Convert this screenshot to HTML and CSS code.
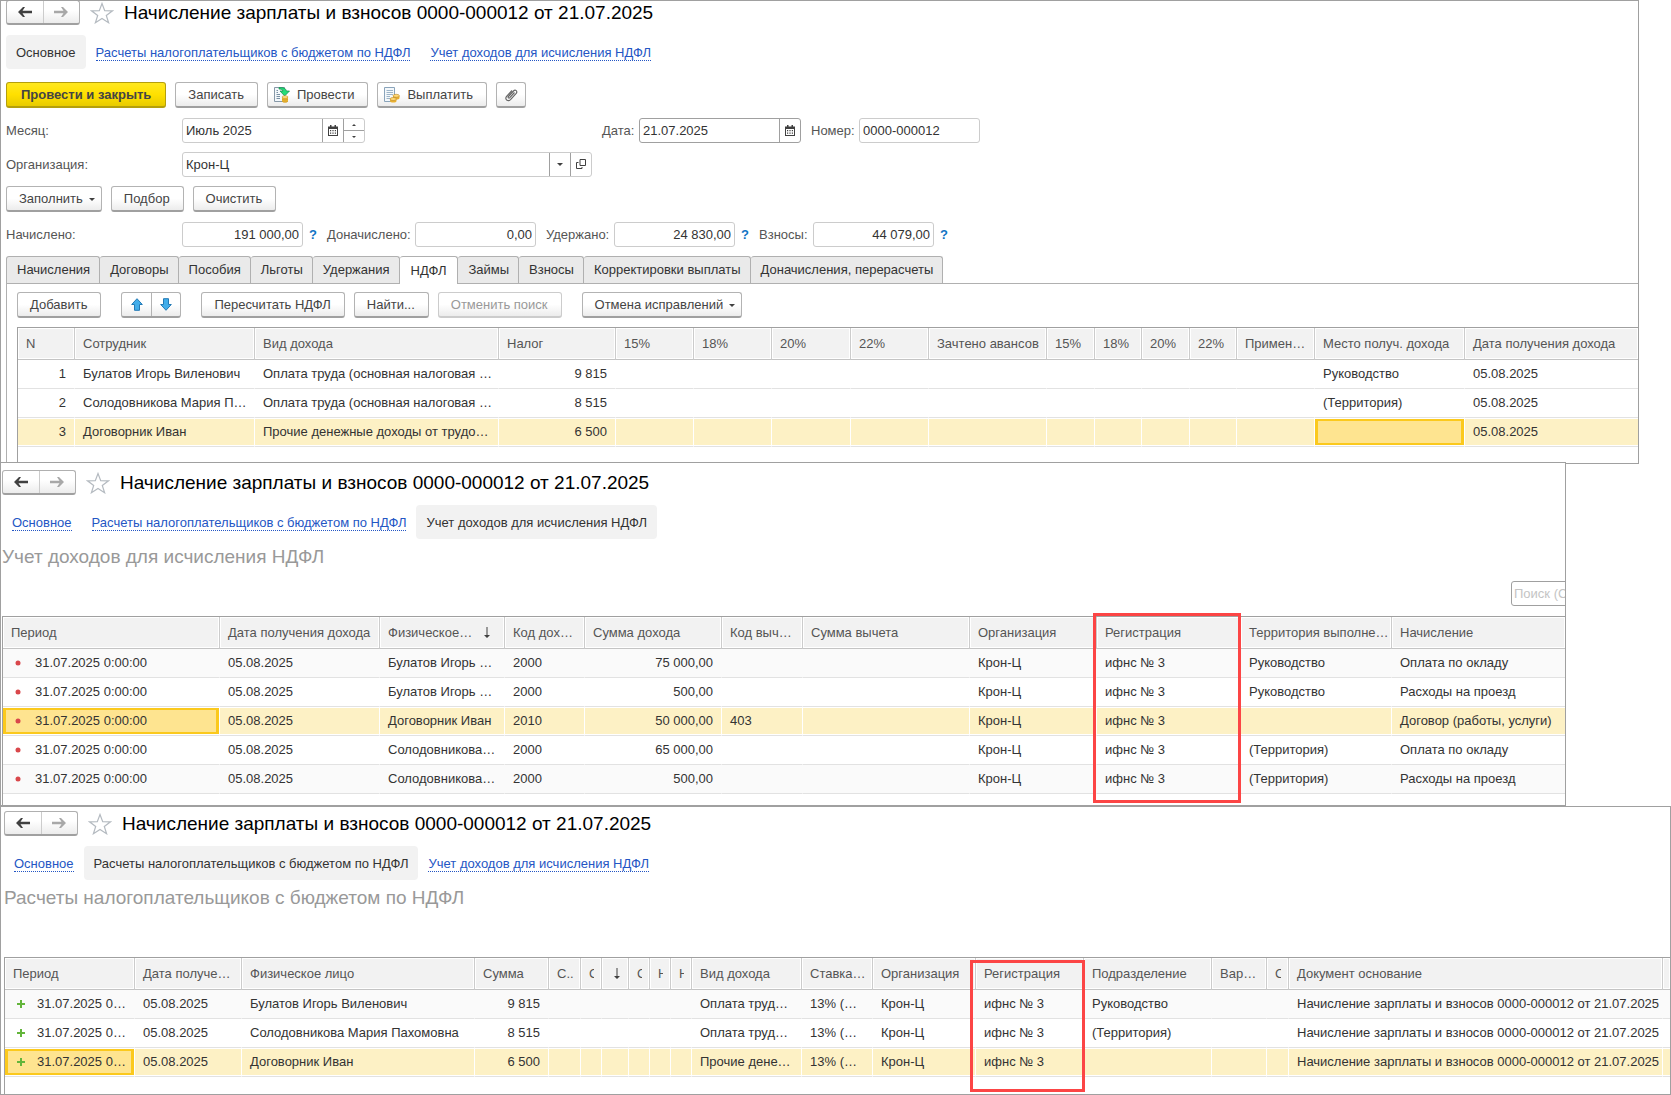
FILE: index.html
```html
<!DOCTYPE html>
<html lang="ru">
<head>
  <meta charset="UTF-8" />
  <meta name="viewport" content="width=device-width, initial-scale=1" />
  <title>Начисление зарплаты и взносов</title>
  <link rel="stylesheet" href="styles.css">
</head>
<body>
  <!-- Общие значки -->
  <svg class="sprite" aria-hidden="true">
    <symbol id="i-back" viewBox="0 0 14 10"><path d="M0 5L5 0H7L4.500 3.800H14V6.200H4.500L7 10H5Z" fill="currentColor"/></symbol>
    <symbol id="i-forward" viewBox="0 0 14 10"><path d="M14 5L9 0H7L9.500 3.800H0V6.200H9.500L7 10H9Z" fill="currentColor"/></symbol>
    <symbol id="i-star" viewBox="0 0 24 22"><path d="M12 1.500L14.700 8.600L22.500 8.800L16.300 13.400L18.600 20.700L12 16.400L5.400 20.700L7.700 13.400L1.500 8.800L9.300 8.600Z" fill="#fff" stroke="#b4bac0" stroke-width="1.200"/></symbol>
    <symbol id="i-calendar" viewBox="0 0 10 11"><path d="M0 1.500H10V11H0Z M2 0H3.500V2H2Z M6.500 0H8V2H6.500Z" fill="#404040"/><path d="M1 4H9V10H1Z" fill="#fff"/><path d="M2 5H3.200V6.200H2Z M4.400 5H5.600V6.200H4.400Z M6.800 5H8V6.200H6.800Z M2 7.500H3.200V8.700H2Z M4.400 7.500H5.600V8.700H4.400Z M6.800 7.500H8V8.700H6.800Z" fill="#404040"/></symbol>
    <symbol id="i-down" viewBox="0 0 6 3"><path d="M0 0H6L3 3Z" fill="#404040"/></symbol>
    <symbol id="i-open" viewBox="0 0 10 10"><path d="M4 0.500H9.500V6.500H4Z M2.500 3.500H0.500V9.500H6V8" fill="none" stroke="#404040"/></symbol>
    <symbol id="i-sort" viewBox="0 0 6 11"><path d="M2.500 0H3.500V8H6L3 11L0 8H2.500Z" fill="#404040"/></symbol>
    <symbol id="i-plus" viewBox="0 0 8 8"><path d="M3 0H5V3H8V5H5V8H3V5H0V3H3Z" fill="#63b53b"/></symbol>
    <symbol id="i-dot" viewBox="0 0 6 6"><circle cx="3" cy="3" r="2.500" fill="#d9474b"/></symbol>
    <symbol id="i-up-blue" viewBox="0 0 12 13"><path d="M6 0.700L11.300 6.500H8.500V12.300H3.500V6.500H0.700Z" fill="#41adea" stroke="#2279b5"/></symbol>
    <symbol id="i-down-blue" viewBox="0 0 12 13"><path d="M6 12.300L0.700 6.500H3.500V0.700H8.500V6.500H11.300Z" fill="#41adea" stroke="#2279b5"/></symbol>
    <symbol id="i-post" viewBox="0 0 16 16"><path d="M0.500 0.500H10.500V14.500H0.500Z" fill="#f4f8fb" stroke="#8799a8"/><path d="M2.500 3.500H4M2.500 5.500H4M2.500 7.500H6M2.500 9.500H6M2.500 11.500H6" stroke="#7890a3"/><path d="M5 0.600C9 0.300 12 1.200 12.400 4H15.500L10.700 9L6 4H9C8.500 2.700 7.500 2 5 2Z" fill="#25dc77" stroke="#16884b" stroke-width=".7"/><path d="M8 10V14C8 16 14 16 14 14V10Z" fill="#edb832"/><ellipse cx="11" cy="10" rx="3" ry="1.300" fill="#ffe28a" stroke="#bf8b20" stroke-width=".5"/><path d="M8 12C9 13.300 13 13.300 14 12M8 14C9 15.500 13 15.500 14 14" fill="none" stroke="#bf8b20" stroke-width=".6"/></symbol>
    <symbol id="i-pay" viewBox="0 0 16 16"><path d="M0.500 0.500H10.500V14.500H0.500Z" fill="#f4f8fb" stroke="#8aa4bb"/><path d="M2.500 3.500H9M2.500 5.500H9M2.500 7.500H9M2.500 9.500H6M2.500 11.500H6" stroke="#9cb4c8"/><path d="M9 9V11C9 13 15.500 13 15.500 11V9Z" fill="#e9b030"/><ellipse cx="12.200" cy="8.800" rx="3.200" ry="1.500" fill="#ffd977" stroke="#b98322" stroke-width=".6"/><path d="M6 12V14C6 16 12.500 16 12.500 14V12Z" fill="#e9b030"/><ellipse cx="9.200" cy="12" rx="3.200" ry="1.500" fill="#ffd977" stroke="#b98322" stroke-width=".6"/></symbol>
    <symbol id="i-clip" viewBox="0 0 14 14"><path d="M10.500 4.500L5.800 9.700C4.800 10.700 3.500 9.500 4.400 8.500L9.500 3C11.300 1 14 3.200 12.200 5.300L6.500 11.600C4 14.200 0.200 11.200 2.600 8.400L8 2.500" fill="none" stroke="#666" stroke-width="1.200"/></symbol>
  </svg>

  <!-- Документ -->
  <section class="window window-doc">
    <header class="title-bar">
      <div class="history">
        <button type="button" aria-label="Назад"><svg><use href="#i-back"/></svg></button>
        <button type="button" aria-label="Вперед" disabled><svg><use href="#i-forward"/></svg></button>
      </div>
      <svg class="star"><use href="#i-star"/></svg>
      <h1>Начисление зарплаты и взносов 0000-000012 от 21.07.2025</h1>
    </header>
    <nav class="links">
      <span class="current">Основное</span>
      <a href="#"><span>Расчеты налогоплательщиков с бюджетом по НДФЛ</span></a>
      <a href="#"><span>Учет доходов для исчисления НДФЛ</span></a>
    </nav>

    <div class="toolbar toolbar-main">
      <button type="button" class="btn primary">Провести и закрыть</button>
      <button type="button" class="btn">Записать</button>
      <button type="button" class="btn with-icon"><svg class="icon16"><use href="#i-post"/></svg>Провести</button>
      <button type="button" class="btn with-icon"><svg class="icon16"><use href="#i-pay"/></svg>Выплатить</button>
      <button type="button" class="btn square" aria-label="Присоединенные файлы"><svg class="icon14"><use href="#i-clip"/></svg></button>
    </div>

    <div class="form-row">
      <div class="form-left">
        <label class="form-label" for="month">Месяц:</label>
        <div class="field field-month">
          <input id="month" type="text" value="Июль 2025">
          <button type="button" aria-label="Выбрать месяц"><svg class="calendar"><use href="#i-calendar"/></svg></button>
          <div class="spinner">
            <button type="button" aria-label="Больше"><svg class="up"><use href="#i-down"/></svg></button>
            <button type="button" aria-label="Меньше"><svg><use href="#i-down"/></svg></button>
          </div>
        </div>
      </div>
      <label class="label-date" for="date">Дата:</label>
      <div class="field field-date">
        <input id="date" type="text" value="21.07.2025">
        <button type="button" aria-label="Выбрать дату"><svg class="calendar"><use href="#i-calendar"/></svg></button>
      </div>
      <label class="label-number" for="number">Номер:</label>
      <div class="field field-short"><input id="number" type="text" value="0000-000012"></div>
    </div>

    <div class="form-row">
      <label class="form-label" for="org">Организация:</label>
      <div class="field field-org">
        <select id="org"><option>Крон-Ц</option></select>
        <span class="drop"><svg class="caret"><use href="#i-down"/></svg></span>
        <button type="button" aria-label="Открыть"><svg class="icon10"><use href="#i-open"/></svg></button>
      </div>
    </div>

    <div class="toolbar">
      <button type="button" class="btn menu">Заполнить<svg class="caret"><use href="#i-down"/></svg></button>
      <button type="button" class="btn">Подбор</button>
      <button type="button" class="btn">Очистить</button>
    </div>

    <div class="form-row totals">
      <label class="form-label" for="accrued">Начислено:</label>
      <div class="field field-short"><input id="accrued" class="num" type="text" value="191 000,00"></div>
      <a class="help" href="#">?</a>
      <label class="label-extra" for="extra">Доначислено:</label>
      <div class="field field-short"><input id="extra" class="num" type="text" value="0,00"></div>
      <label class="label-held" for="held">Удержано:</label>
      <div class="field field-short"><input id="held" class="num" type="text" value="24 830,00"></div>
      <a class="help" href="#">?</a>
      <label class="label-fees" for="fees">Взносы:</label>
      <div class="field field-short"><input id="fees" class="num" type="text" value="44 079,00"></div>
      <a class="help" href="#">?</a>
    </div>

    <div class="tabs" role="tablist">
      <button type="button" role="tab">Начисления</button>
      <button type="button" role="tab">Договоры</button>
      <button type="button" role="tab">Пособия</button>
      <button type="button" role="tab">Льготы</button>
      <button type="button" role="tab">Удержания</button>
      <button type="button" role="tab" class="active" aria-selected="true">НДФЛ</button>
      <button type="button" role="tab">Займы</button>
      <button type="button" role="tab">Взносы</button>
      <button type="button" role="tab">Корректировки выплаты</button>
      <button type="button" role="tab">Доначисления, перерасчеты</button>
    </div>

    <div class="tab-panel">
      <div class="toolbar">
        <button type="button" class="btn">Добавить</button>
        <div class="move">
          <button type="button" aria-label="Вверх"><svg><use href="#i-up-blue"/></svg></button>
          <button type="button" aria-label="Вниз"><svg><use href="#i-down-blue"/></svg></button>
        </div>
        <button type="button" class="btn">Пересчитать НДФЛ</button>
        <button type="button" class="btn">Найти...</button>
        <button type="button" class="btn" disabled>Отменить поиск</button>
        <button type="button" class="btn menu spaced">Отмена исправлений<svg class="caret"><use href="#i-down"/></svg></button>
      </div>
      <div class="grid">
        <table>
          <colgroup>
            <col class="w57"><col class="w180"><col class="w244"><col class="w117"><col class="w78"><col class="w78"><col class="w79"><col class="w78"><col class="w118"><col class="w48"><col class="w47"><col class="w48"><col class="w47"><col class="w78"><col class="w150"><col>
          </colgroup>
          <thead>
            <tr><th>N</th><th>Сотрудник</th><th>Вид дохода</th><th>Налог</th><th>15%</th><th>18%</th><th>20%</th><th>22%</th><th>Зачтено авансов</th><th>15%</th><th>18%</th><th>20%</th><th>22%</th><th>Примен…</th><th>Место получ. дохода</th><th>Дата получения дохода</th></tr>
          </thead>
          <tbody>
            <tr><td class="num">1</td><td>Булатов Игорь Виленович</td><td>Оплата труда (основная налоговая …</td><td class="num">9 815</td><td></td><td></td><td></td><td></td><td></td><td></td><td></td><td></td><td></td><td></td><td>Руководство</td><td>05.08.2025</td></tr>
            <tr><td class="num">2</td><td>Солодовникова Мария П…</td><td>Оплата труда (основная налоговая …</td><td class="num">8 515</td><td></td><td></td><td></td><td></td><td></td><td></td><td></td><td></td><td></td><td></td><td>(Территория)</td><td>05.08.2025</td></tr>
            <tr class="selected"><td class="num">3</td><td>Договорник Иван</td><td>Прочие денежные доходы от трудо…</td><td class="num">6 500</td><td></td><td></td><td></td><td></td><td></td><td></td><td></td><td></td><td></td><td></td><td class="focus"></td><td>05.08.2025</td></tr>
          </tbody>
        </table>
      </div>
    </div>
  </section>

  <!-- Учет доходов -->
  <section class="window window-income">
    <header class="title-bar">
      <div class="history">
        <button type="button" aria-label="Назад"><svg><use href="#i-back"/></svg></button>
        <button type="button" aria-label="Вперед" disabled><svg><use href="#i-forward"/></svg></button>
      </div>
      <svg class="star"><use href="#i-star"/></svg>
      <h1>Начисление зарплаты и взносов 0000-000012 от 21.07.2025</h1>
    </header>
    <nav class="links">
      <a href="#"><span>Основное</span></a>
      <a href="#"><span>Расчеты налогоплательщиков с бюджетом по НДФЛ</span></a>
      <span class="current">Учет доходов для исчисления НДФЛ</span>
    </nav>
    <h2>Учет доходов для исчисления НДФЛ</h2>
    <div class="search-row">
      <input class="search" type="text" aria-label="Поиск" placeholder="Поиск (Ctrl+F)">
    </div>
    <div class="grid striped">
      <table>
        <colgroup>
          <col class="w217"><col class="w160"><col class="w125"><col class="w80"><col class="w137"><col class="w81"><col class="w167"><col class="w127"><col class="w144"><col class="w151"><col>
        </colgroup>
        <thead>
          <tr><th>Период</th><th>Дата получения дохода</th><th><span class="sorted">Физическое…<svg class="sort"><use href="#i-sort"/></svg></span></th><th>Код дох…</th><th>Сумма дохода</th><th>Код выч…</th><th>Сумма вычета</th><th>Организация</th><th>Регистрация</th><th>Территория выполне…</th><th>Начисление</th></tr>
        </thead>
        <tbody>
          <tr><td><svg class="mark dot"><use href="#i-dot"/></svg>31.07.2025 0:00:00</td><td>05.08.2025</td><td>Булатов Игорь …</td><td>2000</td><td class="num">75 000,00</td><td></td><td></td><td>Крон-Ц</td><td>ифнс № 3</td><td>Руководство</td><td>Оплата по окладу</td></tr>
          <tr><td><svg class="mark dot"><use href="#i-dot"/></svg>31.07.2025 0:00:00</td><td>05.08.2025</td><td>Булатов Игорь …</td><td>2000</td><td class="num">500,00</td><td></td><td></td><td>Крон-Ц</td><td>ифнс № 3</td><td>Руководство</td><td>Расходы на проезд</td></tr>
          <tr class="selected"><td class="focus"><svg class="mark dot"><use href="#i-dot"/></svg>31.07.2025 0:00:00</td><td>05.08.2025</td><td>Договорник Иван</td><td>2010</td><td class="num">50 000,00</td><td>403</td><td></td><td>Крон-Ц</td><td>ифнс № 3</td><td></td><td>Договор (работы, услуги)</td></tr>
          <tr><td><svg class="mark dot"><use href="#i-dot"/></svg>31.07.2025 0:00:00</td><td>05.08.2025</td><td>Солодовникова…</td><td>2000</td><td class="num">65 000,00</td><td></td><td></td><td>Крон-Ц</td><td>ифнс № 3</td><td>(Территория)</td><td>Оплата по окладу</td></tr>
          <tr><td><svg class="mark dot"><use href="#i-dot"/></svg>31.07.2025 0:00:00</td><td>05.08.2025</td><td>Солодовникова…</td><td>2000</td><td class="num">500,00</td><td></td><td></td><td>Крон-Ц</td><td>ифнс № 3</td><td>(Территория)</td><td>Расходы на проезд</td></tr>
        </tbody>
      </table>
      <div class="highlight highlight-income"></div>
    </div>
  </section>

  <!-- Расчеты с бюджетом -->
  <section class="window window-budget">
    <header class="title-bar">
      <div class="history">
        <button type="button" aria-label="Назад"><svg><use href="#i-back"/></svg></button>
        <button type="button" aria-label="Вперед" disabled><svg><use href="#i-forward"/></svg></button>
      </div>
      <svg class="star"><use href="#i-star"/></svg>
      <h1>Начисление зарплаты и взносов 0000-000012 от 21.07.2025</h1>
    </header>
    <nav class="links">
      <a href="#"><span>Основное</span></a>
      <span class="current">Расчеты налогоплательщиков с бюджетом по НДФЛ</span>
      <a href="#"><span>Учет доходов для исчисления НДФЛ</span></a>
    </nav>
    <h2>Расчеты налогоплательщиков с бюджетом по НДФЛ</h2>
    <div class="search-row"></div>
    <div class="grid striped">
      <table>
        <colgroup>
          <col class="w130"><col class="w107"><col class="w233"><col class="w74"><col class="w32"><col class="w21"><col class="w27"><col class="w21"><col class="w21"><col class="w21"><col class="w110"><col class="w71"><col class="w103"><col class="w108"><col class="w128"><col class="w55"><col class="w22"><col class="w374"><col>
        </colgroup>
        <thead>
          <tr><th>Период</th><th>Дата получе…</th><th>Физическое лицо</th><th>Сумма</th><th>С..</th><th><span class="cut">С</span></th><th><span class="sorted"><svg class="sort"><use href="#i-sort"/></svg></span></th><th><span class="cut">С</span></th><th><span class="cut">Н</span></th><th><span class="cut">Н</span></th><th>Вид дохода</th><th>Ставка…</th><th>Организация</th><th>Регистрация</th><th>Подразделение</th><th>Вар…</th><th><span class="cut">С</span></th><th>Документ основание</th><th></th></tr>
        </thead>
        <tbody>
          <tr><td><svg class="mark plus"><use href="#i-plus"/></svg>31.07.2025 0…</td><td>05.08.2025</td><td>Булатов Игорь Виленович</td><td class="num">9 815</td><td></td><td></td><td></td><td></td><td></td><td></td><td>Оплата труд…</td><td>13% (…</td><td>Крон-Ц</td><td>ифнс № 3</td><td>Руководство</td><td></td><td></td><td>Начисление зарплаты и взносов 0000-000012 от 21.07.2025</td><td></td></tr>
          <tr><td><svg class="mark plus"><use href="#i-plus"/></svg>31.07.2025 0…</td><td>05.08.2025</td><td>Солодовникова Мария Пахомовна</td><td class="num">8 515</td><td></td><td></td><td></td><td></td><td></td><td></td><td>Оплата труд…</td><td>13% (…</td><td>Крон-Ц</td><td>ифнс № 3</td><td>(Территория)</td><td></td><td></td><td>Начисление зарплаты и взносов 0000-000012 от 21.07.2025</td><td></td></tr>
          <tr class="selected"><td class="focus"><svg class="mark plus"><use href="#i-plus"/></svg>31.07.2025 0…</td><td>05.08.2025</td><td>Договорник Иван</td><td class="num">6 500</td><td></td><td></td><td></td><td></td><td></td><td></td><td>Прочие дене…</td><td>13% (…</td><td>Крон-Ц</td><td>ифнс № 3</td><td></td><td></td><td></td><td>Начисление зарплаты и взносов 0000-000012 от 21.07.2025</td><td></td></tr>
        </tbody>
      </table>
      <div class="highlight highlight-budget"></div>
    </div>
  </section>
</body>
</html>
```
FILE: styles.css
```css
* {
  box-sizing: border-box;
}

body {
  margin: 0;
  background: #fff;
  color: #333;
  font-family: "Liberation Sans", Arial, sans-serif;
  font-size: 13px;
  line-height: 16px;
}

button,
input,
select {
  margin: 0;
  padding: 0;
  border: 0;
  background: none;
  color: inherit;
  font: inherit;
}

svg {
  display: block;
  flex: none;
}

.sprite {
  position: absolute;
  width: 0;
  height: 0;
}

/* Окна */
.window {
  position: relative;
  display: flex;
  flex-direction: column;
  overflow: hidden;
  background: #fff;
  border: 1px solid #a0a0a0;
}

.window-doc {
  width: calc(100% - 32px);
  padding-left: 5px;
}

.window-income {
  width: calc(100% - 105px);
  margin-top: -2px;
  padding: 7px 0 0 1px;
}

.window-budget {
  padding: 4px 0 0 3px;
}

.window-doc .title-bar {
  margin-top: -1px;
}

.title-bar {
  display: flex;
  align-items: center;
  height: 25px;
}

.history {
  display: flex;
  width: 74px;
  height: 25px;
  border: 1px solid #b0b0b0;
  border-bottom: 2px solid #a0a0a0;
  border-radius: 3px;
  background: linear-gradient(#fff 40%, #ececec);
}

.history button {
  flex: 1;
  display: flex;
  align-items: center;
  justify-content: center;
  color: #404040;
}

.history button + button {
  border-left: 1px solid #ccc;
  color: #a8a8a8;
}

.history svg {
  width: 14px;
  height: 10px;
}

.star {
  width: 24px;
  height: 22px;
  margin: 0 10px 0 10px;
}

h1,
h2 {
  margin: 0;
  font-size: 19px;
  font-weight: normal;
  line-height: 24px;
  white-space: nowrap;
}

h1 {
  color: #000;
}

h2 {
  height: 24px;
  margin-top: 6px;
  color: #999;
}

/* Панель ссылок */
.links {
  display: flex;
  margin-top: 10px;
}

.links > * {
  padding: 10px 10px 8px;
  border-radius: 4px;
  white-space: nowrap;
  text-decoration: none;
}

.links .current {
  background: #f2f2f2;
}

.links a {
  color: #2456c4;
}

.links a span {
  border-bottom: 1px dotted #2456c4;
}

/* Кнопки */
.toolbar {
  display: flex;
  gap: 9px;
  margin-top: 9px;
}

.toolbar-main {
  margin: 13px 0 1px;
}

.btn {
  display: flex;
  align-items: center;
  height: 26px;
  padding: 1px 13px 0 12px;
  border: 1px solid #b3b3b3;
  border-bottom: 2px solid #a0a0a0;
  border-radius: 3px;
  background: linear-gradient(#fff 50%, #ececec);
  color: #444;
  white-space: nowrap;
}

.btn.primary {
  padding: 1px 14px 0;
  border-color: #b49f0c;
  background: linear-gradient(#ffe81f, #ffe000 50%, #e8cb00);
  font-weight: bold;
}

.btn.with-icon {
  gap: 7px;
  padding-left: 6px;
}

.btn.square {
  width: 30px;
  padding: 0;
  justify-content: center;
}

.btn.menu {
  gap: 6px;
  padding-right: 6px;
}

.btn.spaced {
  margin-left: 11px;
}

.btn:disabled {
  border-color: #ccc;
  color: #999;
}

.icon16 {
  width: 16px;
  height: 16px;
}

.icon14 {
  width: 14px;
  height: 14px;
}

.icon10 {
  width: 10px;
  height: 10px;
}

.caret {
  width: 6px;
  height: 3px;
}

.calendar {
  width: 10px;
  height: 11px;
}

.move {
  display: flex;
  width: 60px;
  height: 26px;
  margin: 0 11px;
  border: 1px solid #b3b3b3;
  border-bottom: 2px solid #a0a0a0;
  border-radius: 3px;
  background: linear-gradient(#fff 50%, #ececec);
}

.move button {
  flex: 1;
  display: flex;
  align-items: center;
  justify-content: center;
}

.move button + button {
  border-left: 1px solid #b3b3b3;
}

.move svg {
  width: 12px;
  height: 13px;
}

/* Поля */
.form-row {
  display: flex;
  align-items: center;
  margin-top: 9px;
  color: #555;
}

.form-left {
  display: flex;
  align-items: center;
  width: 596px;
}

.form-label {
  width: 176px;
}

.label-date {
  width: 37px;
}

.label-number {
  width: 48px;
  margin-left: 10px;
}

.label-extra {
  width: 88px;
}

.label-held {
  width: 68px;
  margin-left: 10px;
}

.label-fees {
  width: 54px;
}

.field {
  display: flex;
  height: 25px;
  border: 1px solid #ccc;
  border-radius: 3px;
  background: #fff;
  color: #333;
}

.field input,
.field select {
  flex: 1;
  min-width: 0;
  padding: 0 3px;
  appearance: none;
}

.field > button,
.field .drop {
  display: flex;
  align-items: center;
  justify-content: center;
  width: 21px;
  padding: 0 1px 1px 0;
  border-left: 1px solid #a0a0a0;
}

.field-month {
  width: 183px;
}

.field-date {
  width: 162px;
  border-color: #a0a0a0;
}

.field-org {
  width: 410px;
}

.field-short {
  width: 121px;
}

.spinner {
  display: flex;
  flex-direction: column;
  width: 21px;
  border-left: 1px solid #a0a0a0;
}

.spinner button {
  flex: 1;
  display: flex;
  align-items: center;
  justify-content: center;
}

.spinner button + button {
  border-top: 1px solid #a0a0a0;
}

.spinner svg {
  width: 4px;
  height: 2px;
}

.spinner .up {
  transform: rotate(180deg);
}

.totals {
  margin-top: 10px;
}

.num {
  text-align: right;
}

.help {
  width: 24px;
  padding-left: 6px;
  color: #1274c4;
  font-weight: bold;
  text-decoration: none;
}

/* Закладки */
.tabs {
  display: flex;
  margin-top: 9px;
  border-bottom: 1px solid #b0b0b0;
}

.tabs button {
  height: 27px;
  padding: 0 9px 0 10px;
  border: 1px solid #b0b0b0;
  border-width: 1px 1px 0 0;
  border-radius: 3px 3px 0 0;
  background: #eaeaea;
  white-space: nowrap;
}

.tabs button:first-child {
  border-left-width: 1px;
}

.tabs .active {
  height: 28px;
  margin-bottom: -1px;
  padding: 0 11px;
  background: #fff;
}

.tab-panel {
  padding: 0 0 0 10px;
  border-left: 1px solid #b0b0b0;
}

.tab-panel .toolbar {
  margin-top: 8px;
}

.tab-panel .grid {
  margin-top: 9px;
}

/* Таблицы */
.grid {
  position: relative;
  padding-bottom: 16px;
  border: 1px solid #a0a0a0;
  border-width: 1px 0 0 1px;
}

.window-income .grid {
  padding-bottom: 11px;
}

.window-budget .grid {
  padding-bottom: 17px;
}

.grid table {
  width: 100%;
  border-collapse: separate;
  border-spacing: 0;
  table-layout: fixed;
}

.grid th,
.grid td {
  padding: 0 7px 0 8px;
  overflow: hidden;
  white-space: nowrap;
  vertical-align: middle;
}

.grid th {
  height: 32px;
  border-right: 1px solid #ccc;
  border-bottom: 1px solid #c4c4c4;
  background: #f2f2f2;
  box-shadow: inset 0 0 0 1px #fff;
  color: #555;
  font-weight: normal;
  text-align: left;
}

.grid td {
  height: 29px;
  border-right: 1px solid transparent;
  border-bottom: 1px solid #e2e2e2;
}

.grid th:last-child,
.grid td:last-child {
  border-right: 0;
}

.grid td.num {
  padding-right: 8px;
  text-align: right;
}

.grid.striped tbody tr:nth-child(odd) td {
  background: #fafafa;
}

.grid tbody tr.selected td,
.grid.striped tbody tr.selected td {
  border-right-color: #fff;
  background: #fdf1c5;
  box-shadow: inset 0 1px #fff, inset 0 -1px #fff;
}

.grid tbody tr.selected td.focus,
.grid.striped tbody tr.selected td.focus {
  background: #fee490;
  box-shadow: inset 0 1px #fff, inset 0 -1px #fff, inset 0 0 0 3px #fbc91d;
}

.mark {
  display: inline-block;
  vertical-align: middle;
}

.dot {
  width: 6px;
  height: 6px;
  margin: 0 14px 2px 4px;
}

.plus {
  width: 8px;
  height: 8px;
  margin: 0 12px 2px 4px;
}

.cut {
  display: block;
  overflow: hidden;
}

.sorted {
  display: flex;
  align-items: center;
  justify-content: space-between;
}

.sort {
  width: 6px;
  height: 11px;
  margin: 0 7px 0 4px;
}

.highlight {
  position: absolute;
  border: 3px solid #fc4545;
  pointer-events: none;
}

.highlight-income {
  top: -4px;
  left: 1090px;
  width: 148px;
  height: 190px;
}

.highlight-budget {
  top: 2px;
  left: 965px;
  width: 115px;
  height: 132px;
}

.search-row {
  display: flex;
  justify-content: flex-end;
  height: 47px;
  padding-top: 12px;
}

.search {
  width: 140px;
  height: 25px;
  margin-right: -86px;
  padding: 0 2px;
  border: 1px solid #a0a0a0;
  border-radius: 3px;
}

.search::placeholder {
  color: #c4c4c4;
}

/* Ширина колонок */
.w21 { width: 21px; }
.w22 { width: 22px; }
.w27 { width: 27px; }
.w32 { width: 32px; }
.w47 { width: 47px; }
.w48 { width: 48px; }
.w55 { width: 55px; }
.w57 { width: 57px; }
.w71 { width: 71px; }
.w74 { width: 74px; }
.w78 { width: 78px; }
.w79 { width: 79px; }
.w80 { width: 80px; }
.w81 { width: 81px; }
.w103 { width: 103px; }
.w107 { width: 107px; }
.w108 { width: 108px; }
.w110 { width: 110px; }
.w117 { width: 117px; }
.w118 { width: 118px; }
.w125 { width: 125px; }
.w127 { width: 127px; }
.w128 { width: 128px; }
.w130 { width: 130px; }
.w137 { width: 137px; }
.w144 { width: 144px; }
.w150 { width: 150px; }
.w151 { width: 151px; }
.w160 { width: 160px; }
.w167 { width: 167px; }
.w180 { width: 180px; }
.w217 { width: 217px; }
.w233 { width: 233px; }
.w244 { width: 244px; }
.w374 { width: 374px; }
```
